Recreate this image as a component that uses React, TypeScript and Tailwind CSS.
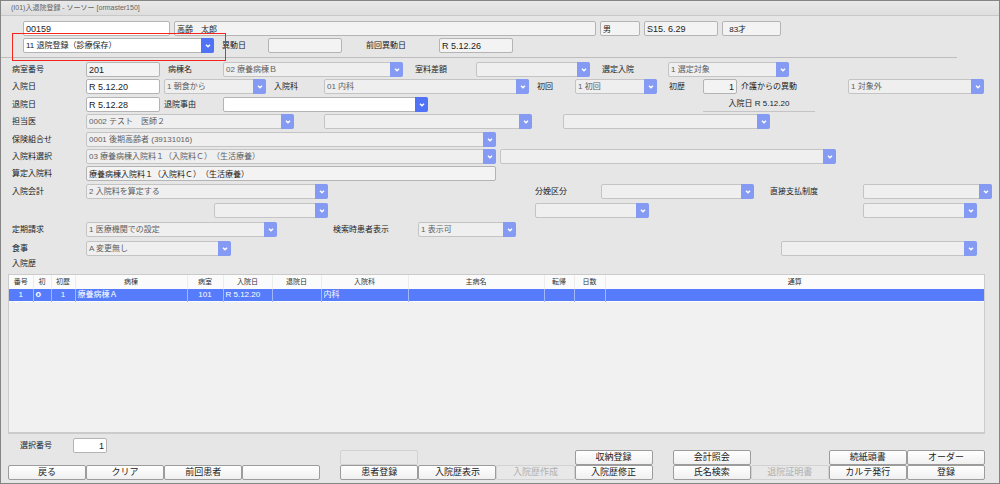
import { ReactNode } from "react";
import { clsx } from "clsx";

type SelectProps = { id?: string; name: string; value?: string; enabled?: boolean; className?: string };

type InputProps = { id?: string; name: string; value?: string; editable?: boolean; className?: string };

const Select = ({ id, name, value = "", enabled, className }: SelectProps) => (
  <div className={clsx("relative h-[15px] min-w-0", className)}>
    <select
      id={id}
      aria-label={id ? undefined : name}
      disabled={!enabled}
      defaultValue={value}
      className={clsx(
        "block h-full w-full appearance-none rounded-xs border pr-3 pl-[2px] opacity-100",
        enabled ? "border-[#b4b4b4] bg-white text-[#222]" : "border-[#c4c4c4] bg-[#efefef] text-[#606060]"
      )}
    >
      <option>{value}</option>
    </select>
    <span
      className={clsx(
        "pointer-events-none absolute inset-y-0 right-0 flex w-[13px] items-center justify-center rounded-r-xs",
        enabled ? "bg-[#5072f6]" : "bg-[#859bf3]"
      )}
    >
      <svg viewBox="0 0 6 4" className="h-1 w-[6px]" fill="none" stroke="white" strokeWidth="1.4">
        <path d="M1 0.8 L3 2.8 L5 0.8" />
      </svg>
    </span>
  </div>
);

const Input = ({ id, name, value = "", editable, className }: InputProps) => (
  <input
    id={id}
    aria-label={id ? undefined : name}
    defaultValue={value}
    readOnly={!editable}
    className={clsx(
      "h-[15px] w-full min-w-0 rounded-xs border border-[#b4b4b4] px-[2px] text-[#222]",
      editable ? "bg-white" : "bg-[#f3f3f3]",
      className
    )}
  />
);

const Label = ({ htmlFor, className, children }: { htmlFor: string; className?: string; children: ReactNode }) => (
  <label htmlFor={htmlFor} className={clsx("min-w-0 whitespace-nowrap", className)}>
    {children}
  </label>
);

const Row = ({ className, children }: { className: string; children: ReactNode }) => (
  <div className={clsx("grid h-[15px] items-center gap-x-1", className)}>{children}</div>
);

const columns = [
  { label: "番号", width: "w-6" },
  { label: "初", width: "w-[18px]" },
  { label: "初歴", width: "w-6" },
  { label: "病棟", width: "w-28" },
  { label: "病室", width: "w-9" },
  { label: "入院日", width: "w-[49px]" },
  { label: "退院日", width: "w-[49px]" },
  { label: "入院科", width: "w-[87px]" },
  { label: "主病名", width: "w-[136px]" },
  { label: "転帰", width: "w-[30px]" },
  { label: "日数", width: "w-[31px]" },
  { label: "通算", width: "" },
];

const history = [["1", "o", "1", "療養病棟Ａ", "101", "R 5.12.20", "", "内科", "", "", "", ""]];

const centered = [0, 2, 4];

type Action = { label: string; disabled?: boolean } | null;

const actionGroups: Action[][] = [
  [
    { label: "", disabled: true }, null, null, { label: "収納登録" },
    { label: "患者登録" }, { label: "入院歴表示" }, { label: "入院歴作成", disabled: true }, { label: "入院歴修正" },
  ],
  [
    { label: "会計照会" }, null, { label: "続紙頭書" }, { label: "オーダー" },
    { label: "氏名検索" }, { label: "退院証明書", disabled: true }, { label: "カルテ発行" }, { label: "登録" },
  ],
];

const leftActions: Action[] = [{ label: "戻る" }, { label: "クリア" }, { label: "前回患者" }, { label: "" }];

const ActionGrid = ({ actions }: { actions: Action[] }) => (
  <div className="grid grid-cols-4">
    {actions.map((action, i) =>
      action ? (
        <button
          key={i}
          type="button"
          disabled={action.disabled}
          aria-label={action.label || "未設定"}
          className={clsx(
            "h-[15px] rounded-xs border text-[9px] leading-[13px] whitespace-nowrap",
            action.disabled
              ? "border-[#d2d2d2] bg-[#e8e8e8] text-[#b0b0b0]"
              : "border-[#9c9c9c] bg-linear-to-b from-white to-[#f0f0f0] text-[#222]"
          )}
        >
          {action.label}
        </button>
      ) : (
        <span key={i} />
      )
    )}
  </div>
);

const App = () => {
  return (
    <div className="flex min-h-screen flex-col border border-[#858585] bg-[#e6e6e6] font-['Liberation_Sans','Noto_Sans_CJK_JP',sans-serif] text-[8px] leading-3 text-[#222] [text-spacing-trim:space-all]">
      <header className="h-[15px] border-b border-[#c8c8c8] bg-linear-to-b from-[#e9e9e9] to-[#dedede] pl-[10px] text-[#666]">
        <h1 className="text-[7px] leading-[14px]">(I01)入退院登録 - ソーソー [ormaster150]</h1>
      </header>

      {/* Patient */}
      <section className="flex flex-col gap-[2px] pt-[5px] pr-[7px] pl-[22px]">
        <Row className="grid-cols-[147fr_422fr_40fr_74fr_59fr_207fr]">
          <Input name="患者番号" value="00159" editable className="text-[9px]" />
          <Input name="氏名" value="高齢　太郎" />
          <Input name="性別" value="男" />
          <Input name="生年月日" value="S15. 6.29" className="text-[9px]" />
          <Input name="年齢" value=" 83才" className="pl-1" />
        </Row>
        <Row className="grid-cols-[191fr_46px_74fr_89px_74fr_475fr]">
          <div className="relative min-w-0">
            <Select name="入退院登録" value="11 退院登録（診療保存）" enabled />
            <div className="pointer-events-none absolute -top-[5px] -right-3 -bottom-2 -left-[11px] z-10 border border-[#f5241d]" />
          </div>
          <Label htmlFor="moveDate" className="pl-1">異動日</Label>
          <Input id="moveDate" name="異動日" />
          <Label htmlFor="prevMoveDate" className="pl-5">前回異動日</Label>
          <Input id="prevMoveDate" name="前回異動日" value="R 5.12.26" className="text-[9px]" />
        </Row>
      </section>
      <hr className="mt-1 mr-[42px] border-[#bdbdbd]" />

      {/* Admission form */}
      <section className="flex flex-col gap-[3px] pt-1 pr-[7px] pl-[11px]">
        <div className="flex flex-col gap-[2px]">
          <Row className="grid-cols-[70px_74fr_55px_180fr_65px_114fr_70px_121fr_199fr]">
            <Label htmlFor="room">病室番号</Label>
            <Input id="room" name="病室番号" value="201" className="text-[9px]" />
            <Label htmlFor="ward" className="pl-1">病棟名</Label>
            <Select id="ward" name="病棟名" value="02 療養病棟Ｂ" />
            <Label htmlFor="roomCharge" className="pl-2">室料差額</Label>
            <Select id="roomCharge" name="室料差額" />
            <Label htmlFor="selected" className="pl-2">選定入院</Label>
            <Select id="selected" name="選定入院" value="1 選定対象" />
          </Row>
          <Row className="grid-cols-[70px_74fr_102fr_50px_205fr_38px_82fr_38px_34fr_103px_136fr_4fr]">
            <Label htmlFor="admitDate">入院日</Label>
            <Input id="admitDate" name="入院日" value="R 5.12.20" editable className="text-[9px]" />
            <Select name="入院時食事" value="1 朝食から" />
            <Label htmlFor="department" className="pl-1">入院科</Label>
            <Select id="department" name="入院科" value="01 内科" />
            <Label htmlFor="first" className="pl-1">初回</Label>
            <Select id="first" name="初回" value="1 初回" />
            <Label htmlFor="firstHistory" className="pl-2">初歴</Label>
            <Input id="firstHistory" name="初歴" value="1" className="text-right text-[9px]" />
            <Label htmlFor="careTransfer">介護からの異動</Label>
            <Select id="careTransfer" name="介護からの異動" value="1 対象外" />
          </Row>
        </div>

        <div className="flex flex-col gap-[2px]">
          <Row className="grid-cols-[70px_74fr_55px_205fr_267fr_112fr_173fr]">
            <Label htmlFor="dischargeDate">退院日</Label>
            <Input id="dischargeDate" name="退院日" value="R 5.12.28" editable className="text-[9px]" />
            <Label htmlFor="reason">退院事由</Label>
            <Select id="reason" name="退院事由" enabled />
            <p className="col-start-6 h-full border-b border-[#c4c4c4] text-center leading-[14px]">入院日 R 5.12.20</p>
          </Row>
          <Row className="grid-cols-[70px_208fr_22fr_208fr_23fr_207fr_218fr]">
            <Label htmlFor="doctor">担当医</Label>
            <Select id="doctor" name="担当医" value="0002 テスト　医師２" />
            <Select name="担当医２" className="col-start-4" />
            <Select name="担当医３" className="col-start-6" />
          </Row>
        </div>

        <div className="flex flex-col gap-[2px]">
          <Row className="grid-cols-[70px_410fr_336fr_152fr]">
            <Label htmlFor="insurance">保険組合せ</Label>
            <Select id="insurance" name="保険組合せ" value="0001 後期高齢者 (39131016)" />
          </Row>
          <Row className="grid-cols-[70px_410fr_336fr_152fr]">
            <Label htmlFor="feeChoice">入院料選択</Label>
            <Select id="feeChoice" name="入院料選択" value="03 療養病棟入院料１（入院料Ｃ）（生活療養）" />
            <Select name="入院料加算" />
          </Row>
          <Row className="grid-cols-[70px_410fr_336fr_152fr]">
            <Label htmlFor="fee">算定入院料</Label>
            <Input id="fee" name="算定入院料" value="療養病棟入院料１（入院料Ｃ）（生活療養）" />
          </Row>
        </div>

        <div className="flex flex-col gap-1">
          <Row className="grid-cols-[70px_242fr_199fr_62px_153fr_101px_129fr]">
            <Label htmlFor="billing">入院会計</Label>
            <Select id="billing" name="入院会計" value="2 入院料を算定する" />
            <Label htmlFor="delivery" className="col-start-4">分娩区分</Label>
            <Select id="delivery" name="分娩区分" />
            <Label htmlFor="directPay" className="pl-3">直接支払制度</Label>
            <Select id="directPay" name="直接支払制度" />
          </Row>
          <Row className="grid-cols-[198fr_114fr_199fr_114fr_206fr_114fr_11fr]">
            <Select name="入院会計２" className="col-start-2" />
            <Select name="分娩区分２" className="col-start-4" />
            <Select name="直接支払制度２" className="col-start-6" />
          </Row>
          <Row className="grid-cols-[70px_191fr_48fr_81px_98fr_472fr]">
            <Label htmlFor="regular">定期請求</Label>
            <Select id="regular" name="定期請求" value="1 医療機関での設定" />
            <Label htmlFor="searchable" className="col-start-4">検索時患者表示</Label>
            <Select id="searchable" name="検索時患者表示" value="1 表示可" />
          </Row>
          <Row className="grid-cols-[70px_145fr_542fr_196fr_11fr]">
            <Label htmlFor="meal">食事</Label>
            <Select id="meal" name="食事" value="A 変更無し" />
            <Select name="食事区分" className="col-start-4" />
          </Row>
        </div>
      </section>

      {/* Admission history */}
      <h2 className="mt-[2px] pl-[11px]">入院歴</h2>
      <div className="mt-1 mr-[14px] ml-[7px] flex-1 border border-b-2 border-[#cbcbcb] bg-[#f1f1f1]">
        <table className="w-full table-fixed border-collapse text-[#333]">
          <thead>
            <tr className="h-[14px] bg-[#fbfbfb] text-[7px]">
              {columns.map((column) => (
                <th
                  key={column.label}
                  className={clsx("border-r border-[#ececec] p-0 font-normal last:border-r-0", column.width)}
                >
                  {column.label}
                </th>
              ))}
            </tr>
          </thead>
          <tbody>
            {history.map((cells, row) => (
              <tr key={row} className="h-3 border-b border-white bg-[#567cfb] text-white">
                {cells.map((cell, i) => (
                  <td
                    key={i}
                    className={clsx(
                      "border-r border-[#a3b7fc] px-[2px] py-0 leading-[11px] whitespace-nowrap last:border-r-0",
                      centered.includes(i) && "text-center",
                      i === 1 && "text-[9px] font-bold"
                    )}
                  >
                    {cell}
                  </td>
                ))}
              </tr>
            ))}
          </tbody>
        </table>
      </div>

      <footer className="mt-1 mr-[14px] mb-[3px] ml-[7px] grid grid-cols-3 items-end gap-5">
        <div>
          <div className="mb-3 flex items-center pl-3">
            <Label htmlFor="selection" className="w-[53px]">選択番号</Label>
            <div className="flex w-[34px]">
              <Input id="selection" name="選択番号" value="1" editable className="text-right text-[9px]" />
            </div>
          </div>
          <ActionGrid actions={leftActions} />
        </div>
        {actionGroups.map((actions, i) => (
          <ActionGrid key={i} actions={actions} />
        ))}
      </footer>
    </div>
  );
};

export default App;
